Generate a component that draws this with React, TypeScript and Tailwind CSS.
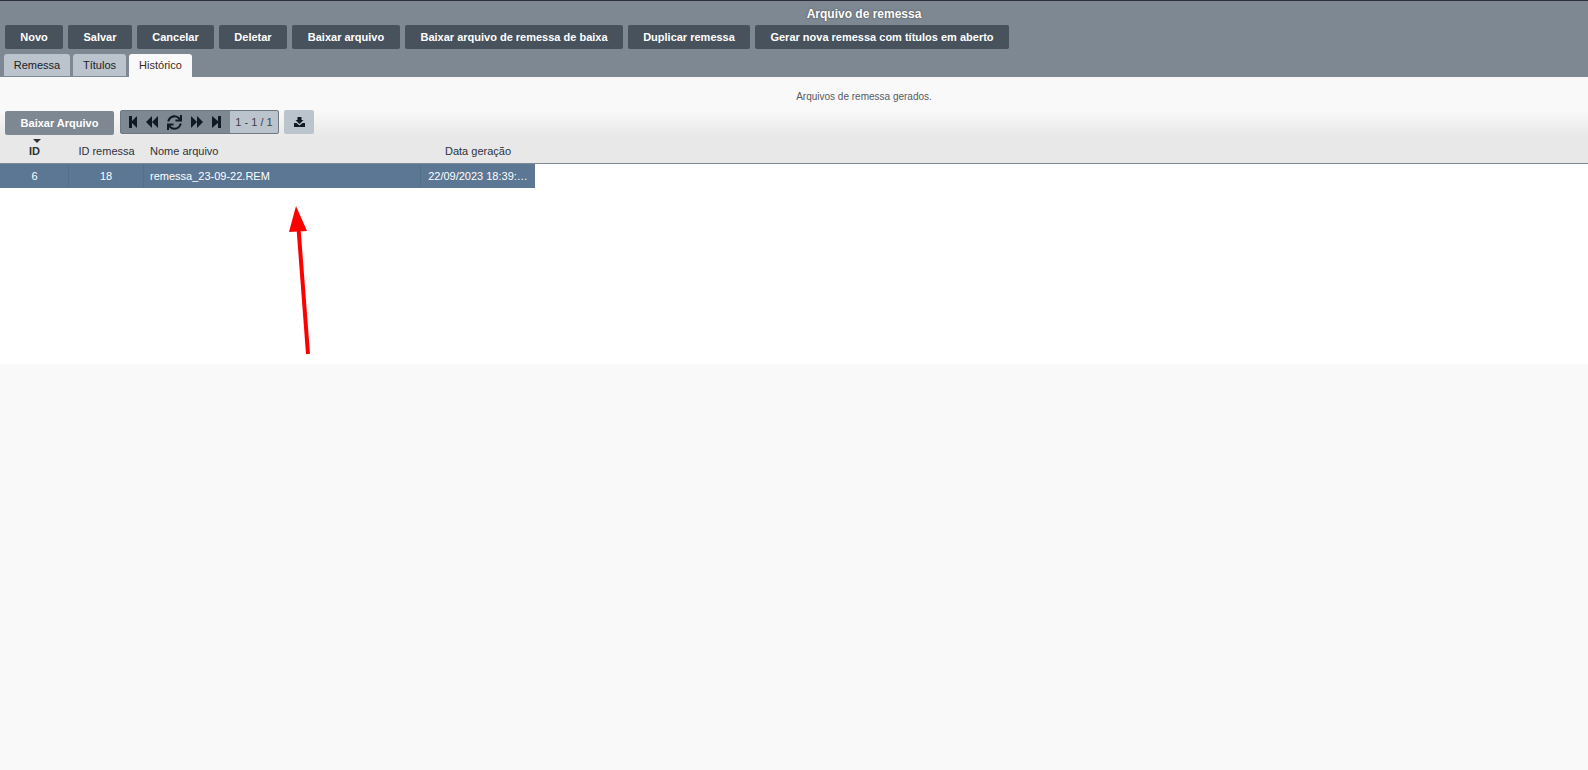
import React from "react";
import { FaSync } from "react-icons/fa";

const buttons = [
  ["Novo", "w-[58px]"],
  ["Salvar", "w-[64px]"],
  ["Cancelar", "w-[77px]"],
  ["Deletar", "w-[68px]"],
  ["Baixar arquivo", "w-[108px]"],
  ["Baixar arquivo de remessa de baixa", "w-[218px]"],
  ["Duplicar remessa", "w-[122px]"],
  ["Gerar nova remessa com títulos em aberto", "w-[254px]"],
];

const StepBack = () => (
  <svg width="8" height="12" viewBox="0 0 8 12" fill="#0f1a24">
    <rect x="0" y="0" width="3" height="12" />
    <polygon points="2,6 8,0 8,12" />
  </svg>
);
const Back = () => (
  <svg width="12" height="12" viewBox="0 0 12 12" fill="#0f1a24">
    <polygon points="0,6 6,0 6,12" />
    <polygon points="6,6 12,0 12,12" />
  </svg>
);
const Fwd = () => (
  <svg width="12" height="12" viewBox="0 0 12 12" fill="#0f1a24">
    <polygon points="12,6 6,0 6,12" />
    <polygon points="6,6 0,0 0,12" />
  </svg>
);
const StepFwd = () => (
  <svg width="9" height="12" viewBox="0 0 9 12" fill="#0f1a24">
    <rect x="6" y="0" width="3" height="12" />
    <polygon points="7,6 0,0 0,12" />
  </svg>
);
const Download = () => (
  <svg width="11" height="10" viewBox="0 0 11 10" fill="#0f1a24">
    <polygon points="3.5,0 7.5,0 7.5,3 9.5,3 5.5,7 1.5,3 3.5,3" />
    <polygon points="0,6 2.5,6 5.5,8.5 8.5,6 11,6 11,10 0,10" />
  </svg>
);

export default function App() {
  return (
    <div className="relative min-h-[770px] bg-[#f9f9f9] font-['Liberation_Sans',Arial,sans-serif]">
      <header className="h-[77px] border-t border-[#2d323a] bg-[#7d8892]">
        <div className="h-[24px] pt-[6px] pl-[140px] text-center text-[12px] leading-[15px] font-bold text-white [text-shadow:0_0_2px_#444]">
          Arquivo de remessa
        </div>
        <div className="flex gap-[5px] pl-[5px]">
          {buttons.map(([label, width]) => (
            <button
              key={label}
              className={`h-[24px] ${width} rounded-[2px] bg-[#47525d] text-center text-[11px] font-bold text-white`}
            >
              {label}
            </button>
          ))}
        </div>
        <div className="mt-[5px] flex h-[23px] items-stretch gap-[3px] pl-[4px] text-[11px]">
          <div className="mb-[1px] flex w-[66px] items-center justify-center rounded-t-[3px] bg-[#bbc3cc] text-[#1b2027]">Remessa</div>
          <div className="mb-[1px] flex w-[53px] items-center justify-center rounded-t-[3px] bg-[#bbc3cc] text-[#1b2027]">Títulos</div>
          <div className="flex w-[63px] items-center justify-center rounded-t-[3px] bg-[#f9f9f9] text-[#3a2a1e]">Histórico</div>
        </div>
      </header>

      <div className="flex h-[33px] items-center justify-center pt-[6px] pl-[140px] text-[10px] text-[#555b63]">
        Arquivos de remessa gerados.
      </div>

      <div className="flex h-[27px] items-start bg-gradient-to-b from-[#f9f9f9] to-[#e8e8e8] pl-[5px]">
        <button className="mt-[1px] h-[24px] w-[109px] rounded-[2px] bg-[#7d8892] text-center text-[11px] font-bold text-white">
          Baixar Arquivo
        </button>
        <div className="ml-[6px] flex h-[24px] w-[159px] overflow-hidden rounded-[2px] border border-[#6e7882] bg-[#7d8892]">
          <div className="flex w-[109px] items-center gap-[9px] pl-[8px]">
            <StepBack />
            <Back />
            <FaSync size={15} color="#0f1a24" />
            <Fwd />
            <StepFwd />
          </div>
          <div className="flex flex-1 items-center justify-center bg-[#bbc3cc] text-[11px] text-[#3b424a]">1 - 1 / 1</div>
        </div>
        <button className="ml-[5px] flex h-[24px] w-[30px] items-center justify-center rounded-[2px] bg-[#bbc3cc]">
          <Download />
        </button>
      </div>

      <div className="flex h-[27px] border-b border-[#7d8892] bg-[#e8e8e8] text-[11px] text-[#2d323a]">
        <div className="relative flex w-[69px] items-center justify-center pt-[3px] font-bold">
          ID
          <span className="absolute top-[2px] left-[33px] h-0 w-0 border-x-[4px] border-t-[4px] border-x-transparent border-t-[#2d323a]" />
        </div>
        <div className="flex w-[75px] items-center justify-center pt-[3px]">ID remessa</div>
        <div className="flex w-[277px] items-center pl-[6px] pt-[3px]">Nome arquivo</div>
        <div className="flex w-[114px] items-center justify-center pt-[3px]">Data geração</div>
      </div>

      <div className="h-[200px] bg-white">
        <div className="flex h-[24px] w-[535px] bg-[#5b7793] text-[11px] text-white">
          <div className="flex w-[69px] items-center justify-center border-r border-[#527089] pl-[1px]">6</div>
          <div className="flex w-[75px] items-center justify-center border-r border-[#527089]">18</div>
          <div className="flex w-[277px] items-center border-r border-[#527089] pl-[6px]">remessa_23-09-22.REM</div>
          <div className="flex flex-1 items-center justify-center">22/09/2023 18:39:…</div>
        </div>
      </div>

      <svg className="absolute top-[205px] left-[285px]" width="28" height="152" viewBox="285 205 28 152">
        <line x1="298.5" y1="228" x2="308" y2="354" stroke="#ff0000" strokeWidth="4" />
        <polygon points="296,206 289,232 307,231" fill="#ff0000" />
      </svg>
    </div>
  );
}
